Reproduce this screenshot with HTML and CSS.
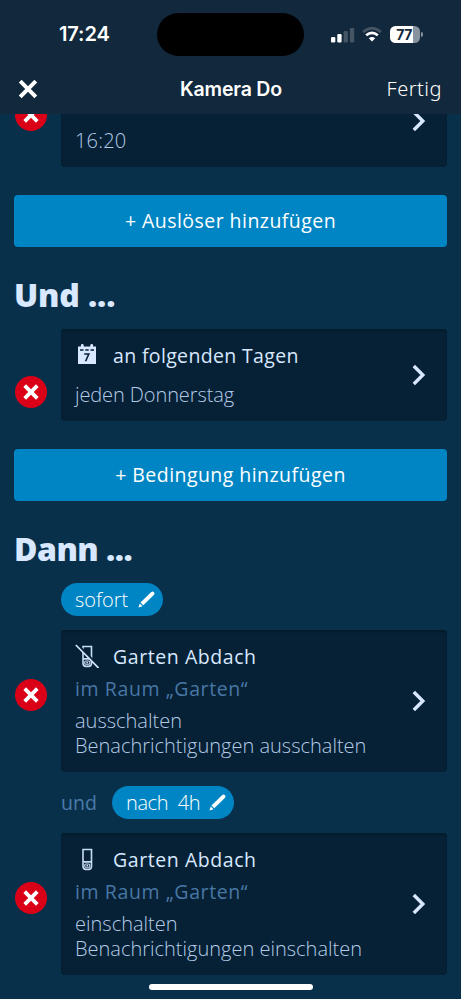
FILE: index.html
```html
<!DOCTYPE html>
<html lang="de">
<head>
<meta charset="utf-8">
<title>Kamera Do</title>
<link rel="stylesheet" href="styles.css">
</head>
<body>
<svg class="defs" width="0" height="0" aria-hidden="true">
  <symbol id="cross" viewBox="0 0 32 32"><path d="M9.700 9.700 22.300 22.300M22.300 9.700 9.700 22.300" fill="none" stroke="#fff" stroke-width="3.800"/></symbol>
  <symbol id="chevron" viewBox="0 0 14 22"><path d="M1.800 2 10.800 11 1.800 20" fill="none" stroke="#d8e8ff" stroke-width="3.400"/></symbol>
  <symbol id="pencil" viewBox="0 0 18 18"><path d="M2.600 12.200 13.800 1.200Q15.600 0 16.900 1.200 18.100 2.700 16.700 4.300L5.600 15.200Z" fill="#fff"/><path d="M1.900 13.300.4 17.600 4.800 16.200Z" fill="#fff"/></symbol>
  <symbol id="camera" viewBox="0 0 24 24"><path d="M8 2.500h8.500V19.500a3 3 0 0 1-3 2.900h-2.500A3 3 0 0 1 8 19.500ZM8 14.900h8.500" fill="none" stroke="#c8dcf2" stroke-width="1.600"/><rect x="9.700" y="17" width="5.100" height="3.300" rx="1.300" fill="none" stroke="#c8dcf2" stroke-width="1.100"/><circle cx="12.250" cy="18.600" r=".9" fill="#c8dcf2"/></symbol>
</svg>
<div class="phone">
  <header class="top">
    <div class="status">
      <span class="time">17:24</span>
      <span class="island"></span>
      <div class="signals">
        <svg width="24" height="16" viewBox="0 0 24 16"><rect x="0" y="10" width="4.300" height="5.500" rx="1.200" fill="#fff"/><rect x="6.300" y="7" width="4.300" height="8.500" rx="1.200" fill="#fff"/><rect x="12.600" y="4" width="4.300" height="11.500" rx="1.200" fill="#455564"/><rect x="18.900" y="1" width="4.300" height="14.500" rx="1.200" fill="#455564"/></svg>
        <svg class="wifi" width="20" height="15" viewBox="0 0 20 15"><path d="M1 5Q10-2.700 19 5" fill="none" stroke="#455564" stroke-width="2.500"/><path d="M4.200 8.300Q10 3.300 15.800 8.300" fill="none" stroke="#fff" stroke-width="2.600"/><path d="M6.800 11.300Q10 8.800 13.200 11.300L10 14.500Z" fill="#fff"/></svg>
        <span class="battery">77</span><span class="cap"></span>
      </div>
    </div>
    <div class="nav">
      <svg class="close" width="32" height="32" viewBox="0 0 32 32"><path d="M8.200 8.200 23.800 23.800M23.800 8.200 8.200 23.800" stroke="#fff" stroke-width="4"/></svg>
      <span class="title">Kamera Do</span>
      <span class="done">Fertig</span>
    </div>
  </header>
  <main>
    <div class="row first">
      <button class="remove"><svg><use href="#cross"/></svg></button>
      <section class="card"><div class="text"><p class="info">16:20</p></div><svg class="chev"><use href="#chevron"/></svg></section>
    </div>
    <button class="add"><span class="trigger">+ Auslöser hinzufügen</span></button>
    <h2 class="und">Und ...</h2>
    <div class="row condition">
      <button class="remove"><svg><use href="#cross"/></svg></button>
      <section class="card">
        <div class="text">
          <div class="name"><svg class="icon" viewBox="0 0 24 24"><path d="M3 3.500h18v17.500H3Z" fill="#d8e8ff"/><path d="M7.300 2.300v3M16.700 2.300v3" stroke="#d8e8ff" stroke-width="2.800" stroke-linecap="round"/><path d="M5 7h3.500M10.300 7h3.400M15.500 7H19" stroke="#062135" stroke-width="1.300"/><path d="M9.200 11h4.600l-3.200 7.300" fill="none" stroke="#062135" stroke-width="1.600"/></svg><span class="days">an folgenden Tagen</span></div>
          <p class="info thursday">jeden Donnerstag</p>
        </div>
        <svg class="chev"><use href="#chevron"/></svg>
      </section>
    </div>
    <button class="add"><span class="cond">+ Bedingung hinzufügen</span></button>
    <h2 class="dann">Dann ...</h2>
    <div class="timing now"><button class="pill"><span class="sofort">sofort</span><svg><use href="#pencil"/></svg></button></div>
    <div class="row action">
      <button class="remove"><svg><use href="#cross"/></svg></button>
      <section class="card">
        <div class="text">
          <div class="name"><svg class="icon" viewBox="0 0 24 24"><use href="#camera"/><path d="M2.500.8 23 22" stroke="#062135" stroke-width="3"/><path d="M.8 1 23.500 24" stroke="#d8e8ff" stroke-width="1.600"/></svg><span class="device">Garten Abdach</span></div>
          <p class="room">im Raum „Garten“</p>
          <p class="info off">ausschalten</p>
          <p class="info notify-off">Benachrichtigungen ausschalten</p>
        </div>
        <svg class="chev"><use href="#chevron"/></svg>
      </section>
    </div>
    <div class="timing later"><span class="and">und</span><button class="pill"><span class="after">nach&nbsp; 4h</span><svg><use href="#pencil"/></svg></button></div>
    <div class="row action">
      <button class="remove"><svg><use href="#cross"/></svg></button>
      <section class="card">
        <div class="text">
          <div class="name"><svg class="icon"><use href="#camera"/></svg><span class="device">Garten Abdach</span></div>
          <p class="room">im Raum „Garten“</p>
          <p class="info on">einschalten</p>
          <p class="info notify-on">Benachrichtigungen einschalten</p>
        </div>
        <svg class="chev"><use href="#chevron"/></svg>
      </section>
    </div>
  </main>
  <div class="home"></div>
</div>
</body>
</html>
```
FILE: styles.css
```css
* { box-sizing: border-box; }
body { margin: 0; background: #08304b; font-family: "Open Sans", "Noto Sans", sans-serif; color: #fff; }
.defs { position: absolute; }
p, h2 { margin: 0; }
svg { display: block; flex: none; }
button { border: 0; padding: 0; color: #fff; font-family: inherit; }
span, p, h2 { white-space: nowrap; }
.phone { position: relative; width: 461px; height: 999px; overflow: hidden; display: flex; flex-direction: column; background: #09304b; }
.top { height: 114px; flex: none; background: #12283c; }
.status { height: 63px; padding: 13px 38px 0 58px; display: grid; grid-template-columns: 99px 147px 1fr; align-items: start; }
.time { font: 600 20px/43px Inter, sans-serif; letter-spacing: -.1px; padding-left: 1px; }
.island { height: 43px; border-radius: 22px; background: #000; }
.signals { height: 43px; display: flex; align-items: center; padding-left: 27px; }
.wifi { margin: 0 8px 0 7px; }
.battery { width: 30px; height: 17px; flex: none; border-radius: 5.500px; background: linear-gradient(90deg, #fff 77%, #89939d 77%); color: #12283c; font: 700 14px/17px Inter, sans-serif; text-align: center; letter-spacing: -.5px; padding-right: 2px; }
.cap { width: 2px; height: 5px; margin-left: 1px; flex: none; border-radius: 0 2px 2px 0; background: #89939d; }
.nav { height: 51px; display: grid; grid-template-columns: 100px 1fr 100px; align-items: center; padding: 0 19px 0 12px; }
.close { margin-left: -.5px; }
.title { text-align: center; font: 600 19.500px/30px Inter, sans-serif; letter-spacing: -.2px; padding-left: 8px; }
.done { text-align: right; font: 350 20px/30px "Noto Sans", sans-serif; letter-spacing: .5px; }
main { flex: 1; overflow: hidden; padding: 0 14px; }
.row { display: grid; grid-template-columns: 47px 1fr; align-items: center; }
.row.first { margin-top: -39px; }
.remove { width: 32px; height: 32px; margin-left: 1px; border-radius: 50%; background: #da0017; transform: translateY(-6px); }
.condition .remove { transform: translateY(17px); }
.remove svg { width: 32px; height: 32px; }
.card { display: flex; align-items: center; justify-content: space-between; height: 92px; padding: 0 21px 0 14px; border-radius: 4px; background: #062135; box-shadow: inset 0 2px 2px #041b2b; }
.text { align-self: stretch; display: flex; flex-direction: column; }
.chev { width: 14px; height: 22px; }
.name { height: 28px; margin-top: 12px; display: flex; align-items: center; gap: 14px; color: #d8e8ff; font-size: 19.500px; font-weight: 500; line-height: 28px; }
.name span { padding-top: 2px; }
.days { letter-spacing: .35px; }
.device { letter-spacing: .57px; }
.icon { width: 24px; height: 24px; }
.info { color: #b4cbe7; font-size: 20px; font-weight: 300; line-height: 25px; }
.first .info { margin-top: 53px; letter-spacing: .2px; }
.thursday { margin-top: 13px; letter-spacing: -.1px; }
.add { display: flex; align-items: center; justify-content: center; width: 433px; height: 52px; margin-top: 28px; padding-bottom: 1px; border-radius: 4px; background: #0085c4; font-size: 19.500px; font-weight: 500; letter-spacing: .45px; }
h2 { height: 82px; padding-top: 25px; color: #d8e8ff; font-size: 32px; line-height: 46px; font-weight: 800; }
.und { letter-spacing: -.15px; }
.dann { letter-spacing: -.5px; }
.timing { display: flex; align-items: center; height: 33px; margin-left: 47px; }
.pill { display: flex; align-items: center; justify-content: space-between; height: 33px; width: 102px; padding: 0 8px 0 14px; border-radius: 17px; background: #0085c4; font-size: 20px; font-weight: 300; }
.pill svg { width: 17px; height: 17px; }
.later { margin-top: 14px; }
.later .pill { width: 122px; }
.after { letter-spacing: -.4px; }
.and { width: 51px; color: #4b7baa; font-size: 19.500px; font-weight: 500; letter-spacing: .1px; }
.action { margin-top: 14px; }
.action .card { height: 142px; }
.room { margin: 6px 0 6px; color: #4877a6; font-size: 19.500px; line-height: 26px; letter-spacing: .6px; }
.home { position: absolute; left: 149px; top: 984px; width: 164px; height: 6px; border-radius: 3px; background: #fff; }
```
